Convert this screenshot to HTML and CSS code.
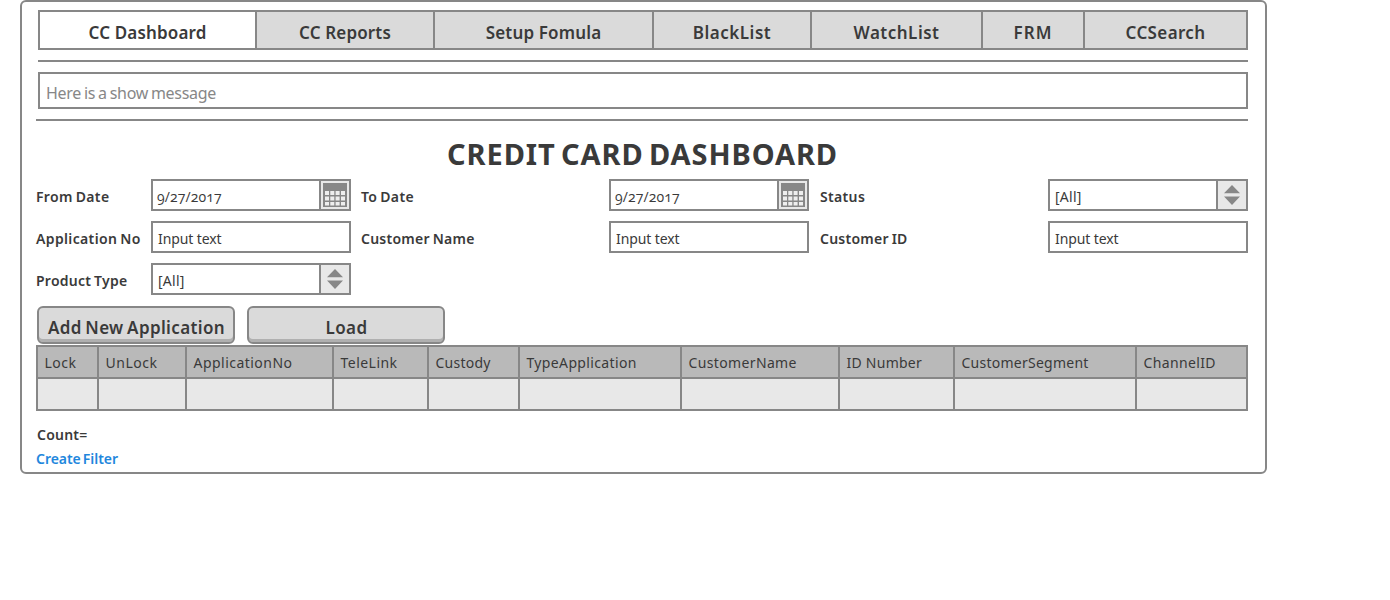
FILE: index.html
```html
<!DOCTYPE html>
<html lang="en">
<head>
<meta charset="utf-8">
<title>Credit Card Dashboard</title>
<link rel="stylesheet" href="styles.css">
</head>
<body>
<main class="frame">
  <nav class="tabs">
    <a class="tab active">CC Dashboard</a>
    <a class="tab">CC Reports</a>
    <a class="tab">Setup Fomula</a>
    <a class="tab track-m">BlackList</a>
    <a class="tab track-m">WatchList</a>
    <a class="tab track-l">FRM</a>
    <a class="tab track-s">CCSearch</a>
  </nav>
  <hr class="rule">
  <div class="message">Here is a show message</div>
  <hr class="rule wide">
  <h1 class="title">CREDIT CARD DASHBOARD</h1>
  <form class="filters">
    <label class="label">From Date</label>
    <div class="field"><span class="value date">9/27/2017</span><span class="addon"><svg width="24" height="24" viewBox="0 0 24 24"><rect width="24" height="24" fill="#878787"/><path fill="#eee" d="M2 8h4v4H2zM7.3 8h4v4h-4zM12.6 8h4v4h-4zM18 8h4v4h-4zM2 13.5h4v4H2zM7.3 13.5h4v4h-4zM12.6 13.5h4v4h-4zM18 13.5h4v4h-4zM2 19h4v3.5H2zM7.3 19h4v3.5h-4zM12.6 19h4v3.5h-4zM18 19h4v3.5h-4z"/></svg></span></div>
    <label class="label">To Date</label>
    <div class="field"><span class="value date">9/27/2017</span><span class="addon"><svg width="24" height="24" viewBox="0 0 24 24"><rect width="24" height="24" fill="#878787"/><path fill="#eee" d="M2 8h4v4H2zM7.3 8h4v4h-4zM12.6 8h4v4h-4zM18 8h4v4h-4zM2 13.5h4v4H2zM7.3 13.5h4v4h-4zM12.6 13.5h4v4h-4zM18 13.5h4v4h-4zM2 19h4v3.5H2zM7.3 19h4v3.5h-4zM12.6 19h4v3.5h-4zM18 19h4v3.5h-4z"/></svg></span></div>
    <label class="label">Status</label>
    <div class="field"><span class="value list">[All]</span><span class="addon"><svg width="16" height="20" viewBox="0 0 16 20"><path fill="#878787" d="M8 0l8 8.3H0zM0 11.5h16L8 20z"/></svg></span></div>
    <label class="label track-s">Application No</label>
    <div class="field"><span class="value">Input text</span></div>
    <label class="label track-xs">Customer Name</label>
    <div class="field"><span class="value">Input text</span></div>
    <label class="label track-xs">Customer ID</label>
    <div class="field"><span class="value">Input text</span></div>
    <label class="label track-xs">Product Type</label>
    <div class="field"><span class="value list">[All]</span><span class="addon"><svg width="16" height="20" viewBox="0 0 16 20"><path fill="#878787" d="M8 0l8 8.3H0zM0 11.5h16L8 20z"/></svg></span></div>
  </form>
  <div class="actions">
    <button class="button" type="button">Add New Application</button>
    <button class="button" type="button">Load</button>
  </div>
  <div class="table">
    <div class="th track-m">Lock</div>
    <div class="th track-m">UnLock</div>
    <div class="th">ApplicationNo</div>
    <div class="th">TeleLink</div>
    <div class="th track-xs">Custody</div>
    <div class="th track-s">TypeApplication</div>
    <div class="th track-s">CustomerName</div>
    <div class="th track-xs">ID Number</div>
    <div class="th track-xs">CustomerSegment</div>
    <div class="th track-s">ChannelID</div>
    <div class="td"></div><div class="td"></div><div class="td"></div><div class="td"></div><div class="td"></div>
    <div class="td"></div><div class="td"></div><div class="td"></div><div class="td"></div><div class="td"></div>
  </div>
  <p class="count">Count=</p>
  <a class="link">Create Filter</a>
</main>
</body>
</html>
```
FILE: styles.css
```css
* { box-sizing: border-box; }
body { margin: 0; background: #fff; color: #3a3a3a; font-family: "Noto Sans", "Open Sans", sans-serif; font-size: 14px; }
.frame { width: 1247px; height: 474px; margin-left: 20px; padding: 8px 17px 0 14px; border: 2px solid #878787; border-radius: 6px; }

.tabs { display: grid; grid-template-columns: 217px 178px 219px 158px 171px 102px 163px; height: 40px; margin-left: 2px; border: 2px solid #878787; border-left: 0; background: #dadada; font-size: 17px; font-weight: 600; letter-spacing: .15px; }
.tab { display: flex; align-items: center; justify-content: center; padding: 5px 0 0; border-left: 2px solid #878787; white-space: nowrap; }
.tab.active { background: #fff; }

.rule { height: 2px; margin: 10px 0 10px 2px; border: 0; background: #878787; }
.rule.wide { margin-left: 0; margin-bottom: 0; }
.message { display: flex; align-items: center; height: 37px; margin-left: 2px; padding: 4px 0 0 6px; border: 2px solid #878787; color: #878787; font-size: 16px; letter-spacing: -.28px; word-spacing: -1px; }
.title { display: flex; align-items: center; justify-content: center; height: 58px; margin: 0; padding: 6px 0 0 1px; font-size: 29px; font-weight: 700; letter-spacing: .9px; word-spacing: -3px; white-space: nowrap; }

.filters { display: grid; grid-template-columns: 115px 210px 248px 211px 228px 200px; grid-auto-rows: 32px; row-gap: 10px; }
.label { display: flex; align-items: center; padding-top: 3px; font-weight: 600; letter-spacing: .34px; word-spacing: -1px; white-space: nowrap; }
.field { display: flex; width: 200px; border: 2px solid #878787; }
.value { flex: 1; display: flex; align-items: center; padding: 3px 0 0 5px; letter-spacing: -.1px; }
.list { letter-spacing: .25px; }
.date { padding-left: 4px; font-family: "Open Sans", "Noto Sans", sans-serif; font-variant-numeric: oldstyle-nums; letter-spacing: .12px; }
.addon { display: flex; align-items: center; justify-content: center; width: 30px; border-left: 2px solid #878787; background: #e8e8e8; }

.actions { display: flex; gap: 12px; margin: 11px 0 1px 1px; }
.button { display: flex; align-items: center; justify-content: center; width: 198px; height: 38px; padding: 5px 0 0 1px; border: 2px solid #878787; border-radius: 6px; background: #dadada; box-shadow: inset 0 -3px #b0b0b0; color: inherit; font: 600 17px "Noto Sans", sans-serif; letter-spacing: .37px; word-spacing: -1.3px; white-space: nowrap; }

.table { display: grid; grid-template-columns: 61px 88px 147px 95px 91px 162px 158px 115px 182px 111px; grid-template-rows: 32px 32px; width: 1212px; border: solid #878787; border-width: 2px 2px 0 0; }
.th, .td { display: flex; align-items: center; border: solid #878787; border-width: 0 0 2px 2px; }
.th { padding: 1px 0 0 6.5px; background: #b9b9b9; letter-spacing: .47px; }
.td { background: #e8e8e8; }

.count { margin: 14px 0 0 1px; font-weight: 600; line-height: 19px; letter-spacing: .23px; }
.link { display: block; margin-top: 5px; color: #1f87dd; font-weight: 600; line-height: 19px; letter-spacing: -.04px; word-spacing: -1.5px; }

.track-xs { letter-spacing: .25px; }
.track-s { letter-spacing: .36px; }
.track-m { letter-spacing: .5px; }
.track-l { letter-spacing: 1px; }
```
